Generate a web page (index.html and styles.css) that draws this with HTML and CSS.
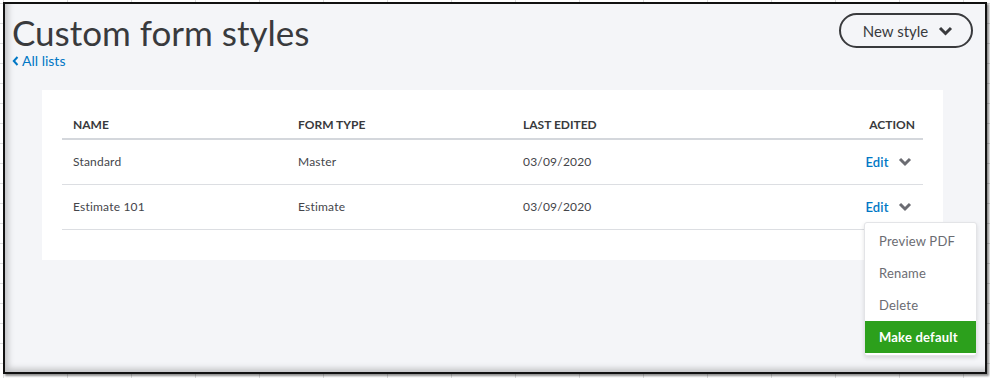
FILE: index.html
```html
<!DOCTYPE html>
<html lang="en">
<head>
    <meta charset="UTF-8">
    <title>Custom form styles</title>
    <link rel="stylesheet" href="styles.css">
</head>
<body>
    <!-- window frame -->
    <div class="frame">
        <!-- page header -->
        <div class="page-header">
            <div class="title-block">
                <h1>Custom form styles</h1>
                <a href="#" class="back-link">
                    <svg width="7" height="10" viewBox="0 0 7 10"><path d="M5.5 1 L1.8 5 L5.5 9" fill="none" stroke="#0077c5" stroke-width="2"/></svg>
                    All lists
                </a>
            </div>
            <button class="new-style">
                New style
                <svg width="15" height="10" viewBox="0 0 15 10"><path d="M2 2 L7.5 7.5 L13 2" fill="none" stroke="#393a3d" stroke-width="3"/></svg>
            </button>
        </div>

        <!-- table card -->
        <div class="card">
            <table class="styles-table">
                <thead>
                    <tr>
                        <th class="col-name">NAME</th>
                        <th class="col-type">FORM TYPE</th>
                        <th class="col-date">LAST EDITED</th>
                        <th class="col-action">ACTION</th>
                    </tr>
                </thead>
                <tbody>
                    <tr>
                        <td>Standard</td>
                        <td>Master</td>
                        <td>03/09/2020</td>
                        <td class="col-action">
                            <span class="edit">Edit</span>
                            <svg class="caret" width="14" height="10" viewBox="0 0 14 10"><path d="M2 2 L7 7 L12 2" fill="none" stroke="#6b6c72" stroke-width="3"/></svg>
                        </td>
                    </tr>
                    <tr>
                        <td>Estimate 101</td>
                        <td>Estimate</td>
                        <td>03/09/2020</td>
                        <td class="col-action">
                            <span class="edit">Edit</span>
                            <svg class="caret" width="14" height="10" viewBox="0 0 14 10"><path d="M2 2 L7 7 L12 2" fill="none" stroke="#6b6c72" stroke-width="3"/></svg>
                            <ul class="menu">
                                <li>Preview PDF</li>
                                <li>Rename</li>
                                <li>Delete</li>
                                <li class="active">Make default</li>
                            </ul>
                        </td>
                    </tr>
                </tbody>
            </table>
        </div>
    </div>
</body>
</html>
```

FILE: styles.css
```css
* {
    margin: 0;
    padding: 0;
    box-sizing: border-box;
}

/* spreadsheet grid behind the window */
body {
    font-family: Lato, "Open Sans", sans-serif;
    color: #393a3d;
    background-color: #fff;
    background-image:
        linear-gradient(to right, #dcdcdc 1px, transparent 1px),
        linear-gradient(to bottom, #dcdcdc 1px, transparent 1px);
    background-size: 64px 20px;
    background-position: 3px 3px;
    height: 378px;
    padding: 2px 3px 0 3px;
}

.frame {
    height: 372px;
    width: 984px;
    border: 2px solid #111;
    background-color: #f4f5f8;
    box-shadow: inset 7px -7px 6px -4px rgba(0, 0, 0, 0.22), 2px 2px 2px rgba(0, 0, 0, 0.45);
    padding: 0 12px 0 7px;
}

.page-header {
    display: flex;
    justify-content: space-between;
    align-items: flex-start;
}

h1 {
    font-size: 35px;
    font-weight: 400;
    line-height: 40px;
    margin-top: 8px;
}

.back-link {
    display: flex;
    align-items: center;
    gap: 3px;
    font-size: 14px;
    color: #0077c5;
    text-decoration: none;
    line-height: 18px;
}

.new-style {
    margin-top: 9px;
    width: 134px;
    height: 35px;
    border: 2px solid #393a3d;
    border-radius: 18px;
    background: transparent;
    font-family: inherit;
    font-size: 15px;
    color: #393a3d;
    display: flex;
    align-items: center;
    justify-content: center;
    gap: 10px;
    padding-left: 4px;
}

/* white card */
.card {
    background-color: #fff;
    margin: 20px 0 0 30px;
    width: 901px;
    height: 170px;
    padding: 21px 20px 0 20px;
}

.styles-table {
    width: 100%;
    border-collapse: collapse;
    font-size: 12px;
}

.styles-table th {
    text-align: left;
    font-weight: 700;
    font-size: 12px;
    color: #393a3d;
    height: 28px;
    padding: 0 11px;
    border-bottom: 2px solid #d4d7dc;
}

.styles-table td {
    height: 45px;
    padding: 0 11px;
    color: #44454a;
    border-bottom: 1px solid #dcdee2;
    letter-spacing: 0.2px;
}

.col-name,
.col-type,
.col-date {
    width: 225px;
}

.styles-table .col-action {
    text-align: right;
    padding-right: 8px;
    position: relative;
}

.edit {
    color: #0077c5;
    font-size: 13px;
    font-weight: 600;
    vertical-align: middle;
}

.caret {
    vertical-align: middle;
    margin-left: 6px;
    margin-right: 3px;
}

/* dropdown under the second row */
.menu {
    list-style: none;
    position: absolute;
    top: 37px;
    right: -54px;
    width: 113px;
    background-color: #fff;
    border: 1px solid #e3e4e7;
    border-radius: 3px;
    box-shadow: 0 2px 4px rgba(0, 0, 0, 0.12);
    padding-top: 2px;
    text-align: left;
    z-index: 10;
}

.menu li {
    height: 32px;
    line-height: 32px;
    padding-left: 14px;
    font-size: 13px;
    color: #6b6c72;
}

.menu li.active {
    background-color: #2ca01c;
    color: #fff;
    font-weight: 700;
    margin-bottom: 2px;
}
```
